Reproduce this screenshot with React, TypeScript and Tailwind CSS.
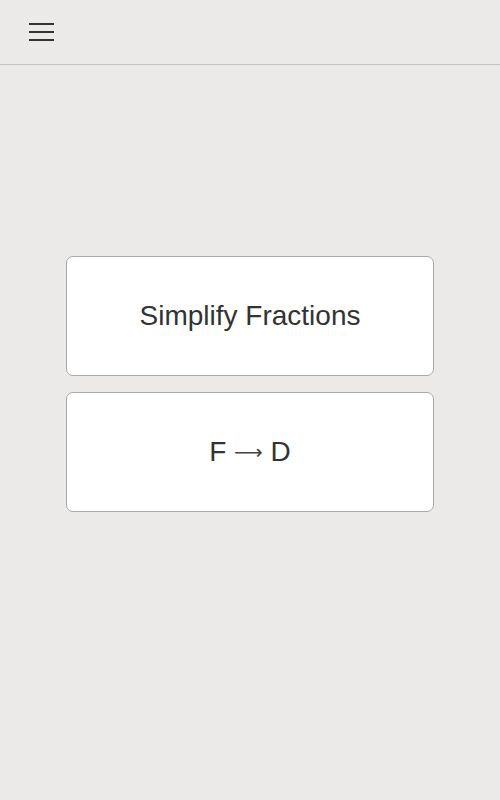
export default function App() {
  return (
    <div className="min-h-[800px] bg-[#ebeae8] font-['Liberation_Sans',Arial,sans-serif]">
      <header className="h-[65px] border-b border-[#c4c3c1] flex items-center px-[29px]">
        <button className="flex flex-col gap-[6px] w-[25px]" aria-label="Menu">
          <span className="block h-[2px] w-full bg-[#333]" />
          <span className="block h-[2px] w-full bg-[#333]" />
          <span className="block h-[2px] w-full bg-[#333]" />
        </button>
      </header>
      <main className="flex flex-col gap-[16px] px-[66px] pt-[191px]">
        <button className="h-[120px] w-full rounded-[7px] border border-[#a9a9a9] bg-white text-[28px] text-[#333]">
          Simplify Fractions
        </button>
        <button className="h-[120px] w-full rounded-[7px] border border-[#a9a9a9] bg-white text-[28px] text-[#333]">
          F <span className="font-['DejaVu_Sans',sans-serif] text-[20px] align-[2px] text-[#444]">⟶</span> D
        </button>
      </main>
    </div>
  );
}
